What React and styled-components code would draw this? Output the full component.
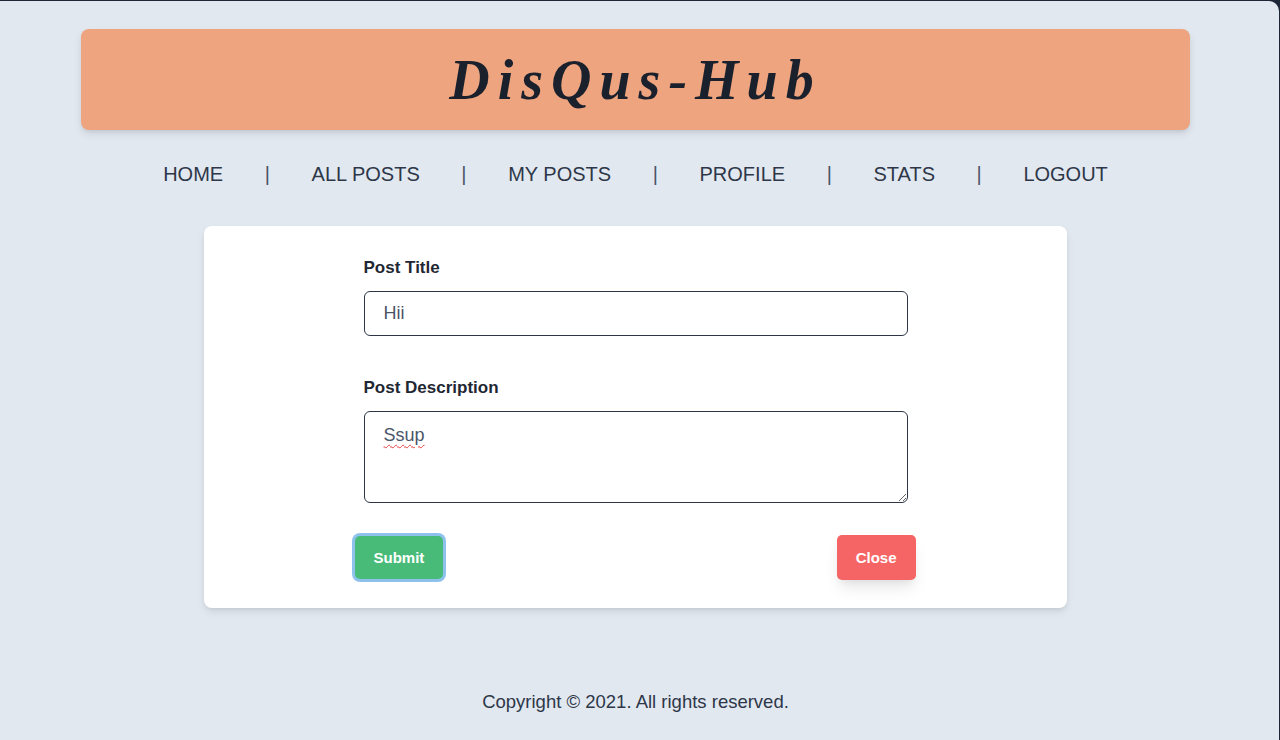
import React, { useState } from "react";
import styled, { createGlobalStyle } from "styled-components";

const GlobalStyle = createGlobalStyle`
  * {
    box-sizing: border-box;
  }
  body {
    margin: 0;
    background-color: #1c2636;
    font-family: "Liberation Sans", Arial, sans-serif;
  }
`;

const Page = styled.div`
  display: flex;
  flex-direction: column;
  min-height: 739px;
  margin: 1px 1px 0 0;
  padding-right: 8px;
  background-color: #e2e8f0;
  border-top-right-radius: 10px;
`;

const Header = styled.header`
  display: flex;
  align-items: center;
  justify-content: center;
  height: 101px;
  margin: 28px 81px 0;
  background-color: #eea47f;
  border-radius: 8px;
  box-shadow: 0 4px 8px -1px rgba(0, 0, 0, 0.12), 0 2px 4px -1px rgba(0, 0, 0, 0.06);
`;

const Title = styled.h1`
  margin: 0;
  font-family: "Liberation Serif", "Times New Roman", serif;
  font-style: italic;
  font-weight: bold;
  font-size: 56px;
  line-height: 1;
  letter-spacing: 8px;
  color: #1a202c;
`;

const Nav = styled.nav`
  display: flex;
  justify-content: center;
  align-items: center;
  gap: 41.6px;
  margin-top: 30px;
  font-size: 20px;
  line-height: 28px;
  color: #2d3748;
`;

const NavLink = styled.a`
  color: inherit;
  text-decoration: none;
  cursor: pointer;
`;

const Divider = styled.span`
  color: #4a5568;
`;

const Card = styled.div`
  width: 863px;
  margin: 38px auto 0;
  padding: 30px 0 28px;
  background-color: #fff;
  border-radius: 8px;
  box-shadow: 0 4px 8px -1px rgba(0, 0, 0, 0.1), 0 2px 4px -1px rgba(0, 0, 0, 0.06);
`;

const Form = styled.form`
  max-width: 544px;
  margin: 0 auto;
`;

const Field = styled.div`
  display: flex;
  flex-direction: column;
  margin-bottom: ${(p) => p.$gap || 0}px;
`;

const Label = styled.label`
  font-size: 17px;
  line-height: 24px;
  font-weight: bold;
  color: #1f2733;
  margin-bottom: 11px;
`;

const Input = styled.input`
  height: 45px;
  padding: 0 19px;
  border: 1px solid #2d3748;
  border-radius: 6px;
  font-family: inherit;
  font-size: 18px;
  color: #4a5568;
  outline: none;
`;

const TextArea = styled.textarea`
  display: block;
  height: 92px;
  padding: 12px 19px;
  border: 1px solid #2d3748;
  border-radius: 6px;
  font-family: inherit;
  font-size: 18px;
  line-height: 22px;
  color: #4a5568;
  outline: none;
  text-decoration: underline wavy #e53e3e;
  text-decoration-thickness: 1px;
  text-underline-offset: 3px;
`;

const Actions = styled.div`
  display: flex;
  justify-content: space-between;
  align-items: center;
  margin: 32px -8px 0 -9px;
`;

const Button = styled.button`
  height: ${(p) => (p.$focused ? 43 : 45)}px;
  padding: 0 19px;
  border: none;
  border-radius: 5px;
  font-family: inherit;
  font-size: 15px;
  font-weight: bold;
  color: #fff;
  cursor: pointer;
  background-color: ${(p) => p.$bg};
  box-shadow: ${(p) =>
    p.$focused
      ? "0 0 0 3px rgba(66, 153, 225, 0.6)"
      : "0 10px 15px -3px rgba(0, 0, 0, 0.1), 0 4px 6px -2px rgba(0, 0, 0, 0.05)"};
`;

const Footer = styled.footer`
  margin-top: auto;
  padding-bottom: 24px;
  text-align: center;
  font-size: 18.5px;
  line-height: 28px;
  color: #2d3748;
`;

const links = ["HOME", "ALL POSTS", "MY POSTS", "PROFILE", "STATS", "LOGOUT"];

function App() {
  const [post, setPost] = useState({ title: "Hii", description: "Ssup" });

  const handleChange = (e) => {
    const { name, value } = e.target;
    setPost({ ...post, [name]: value });
  };

  const handleSubmit = (e) => {
    e.preventDefault();
    console.log(post);
  };

  return (
    <Page>
      <GlobalStyle />
      <Header>
        <Title>DisQus-Hub</Title>
      </Header>

      <Nav>
        {links.map((link, i) => (
          <React.Fragment key={link}>
            {i > 0 && <Divider>|</Divider>}
            <NavLink>{link}</NavLink>
          </React.Fragment>
        ))}
      </Nav>

      <Card>
        <Form onSubmit={handleSubmit}>
          <Field $gap={40}>
            <Label>Post Title</Label>
            <Input name="title" value={post.title} onChange={handleChange} />
          </Field>
          <Field>
            <Label>Post Description</Label>
            <TextArea
              name="description"
              value={post.description}
              onChange={handleChange}
            />
          </Field>
          <Actions>
            <Button type="submit" $bg="#48bb78" $focused>
              Submit
            </Button>
            <Button type="button" $bg="#f56565">
              Close
            </Button>
          </Actions>
        </Form>
      </Card>

      <Footer>Copyright © 2021. All rights reserved.</Footer>
    </Page>
  );
}

export default App;
